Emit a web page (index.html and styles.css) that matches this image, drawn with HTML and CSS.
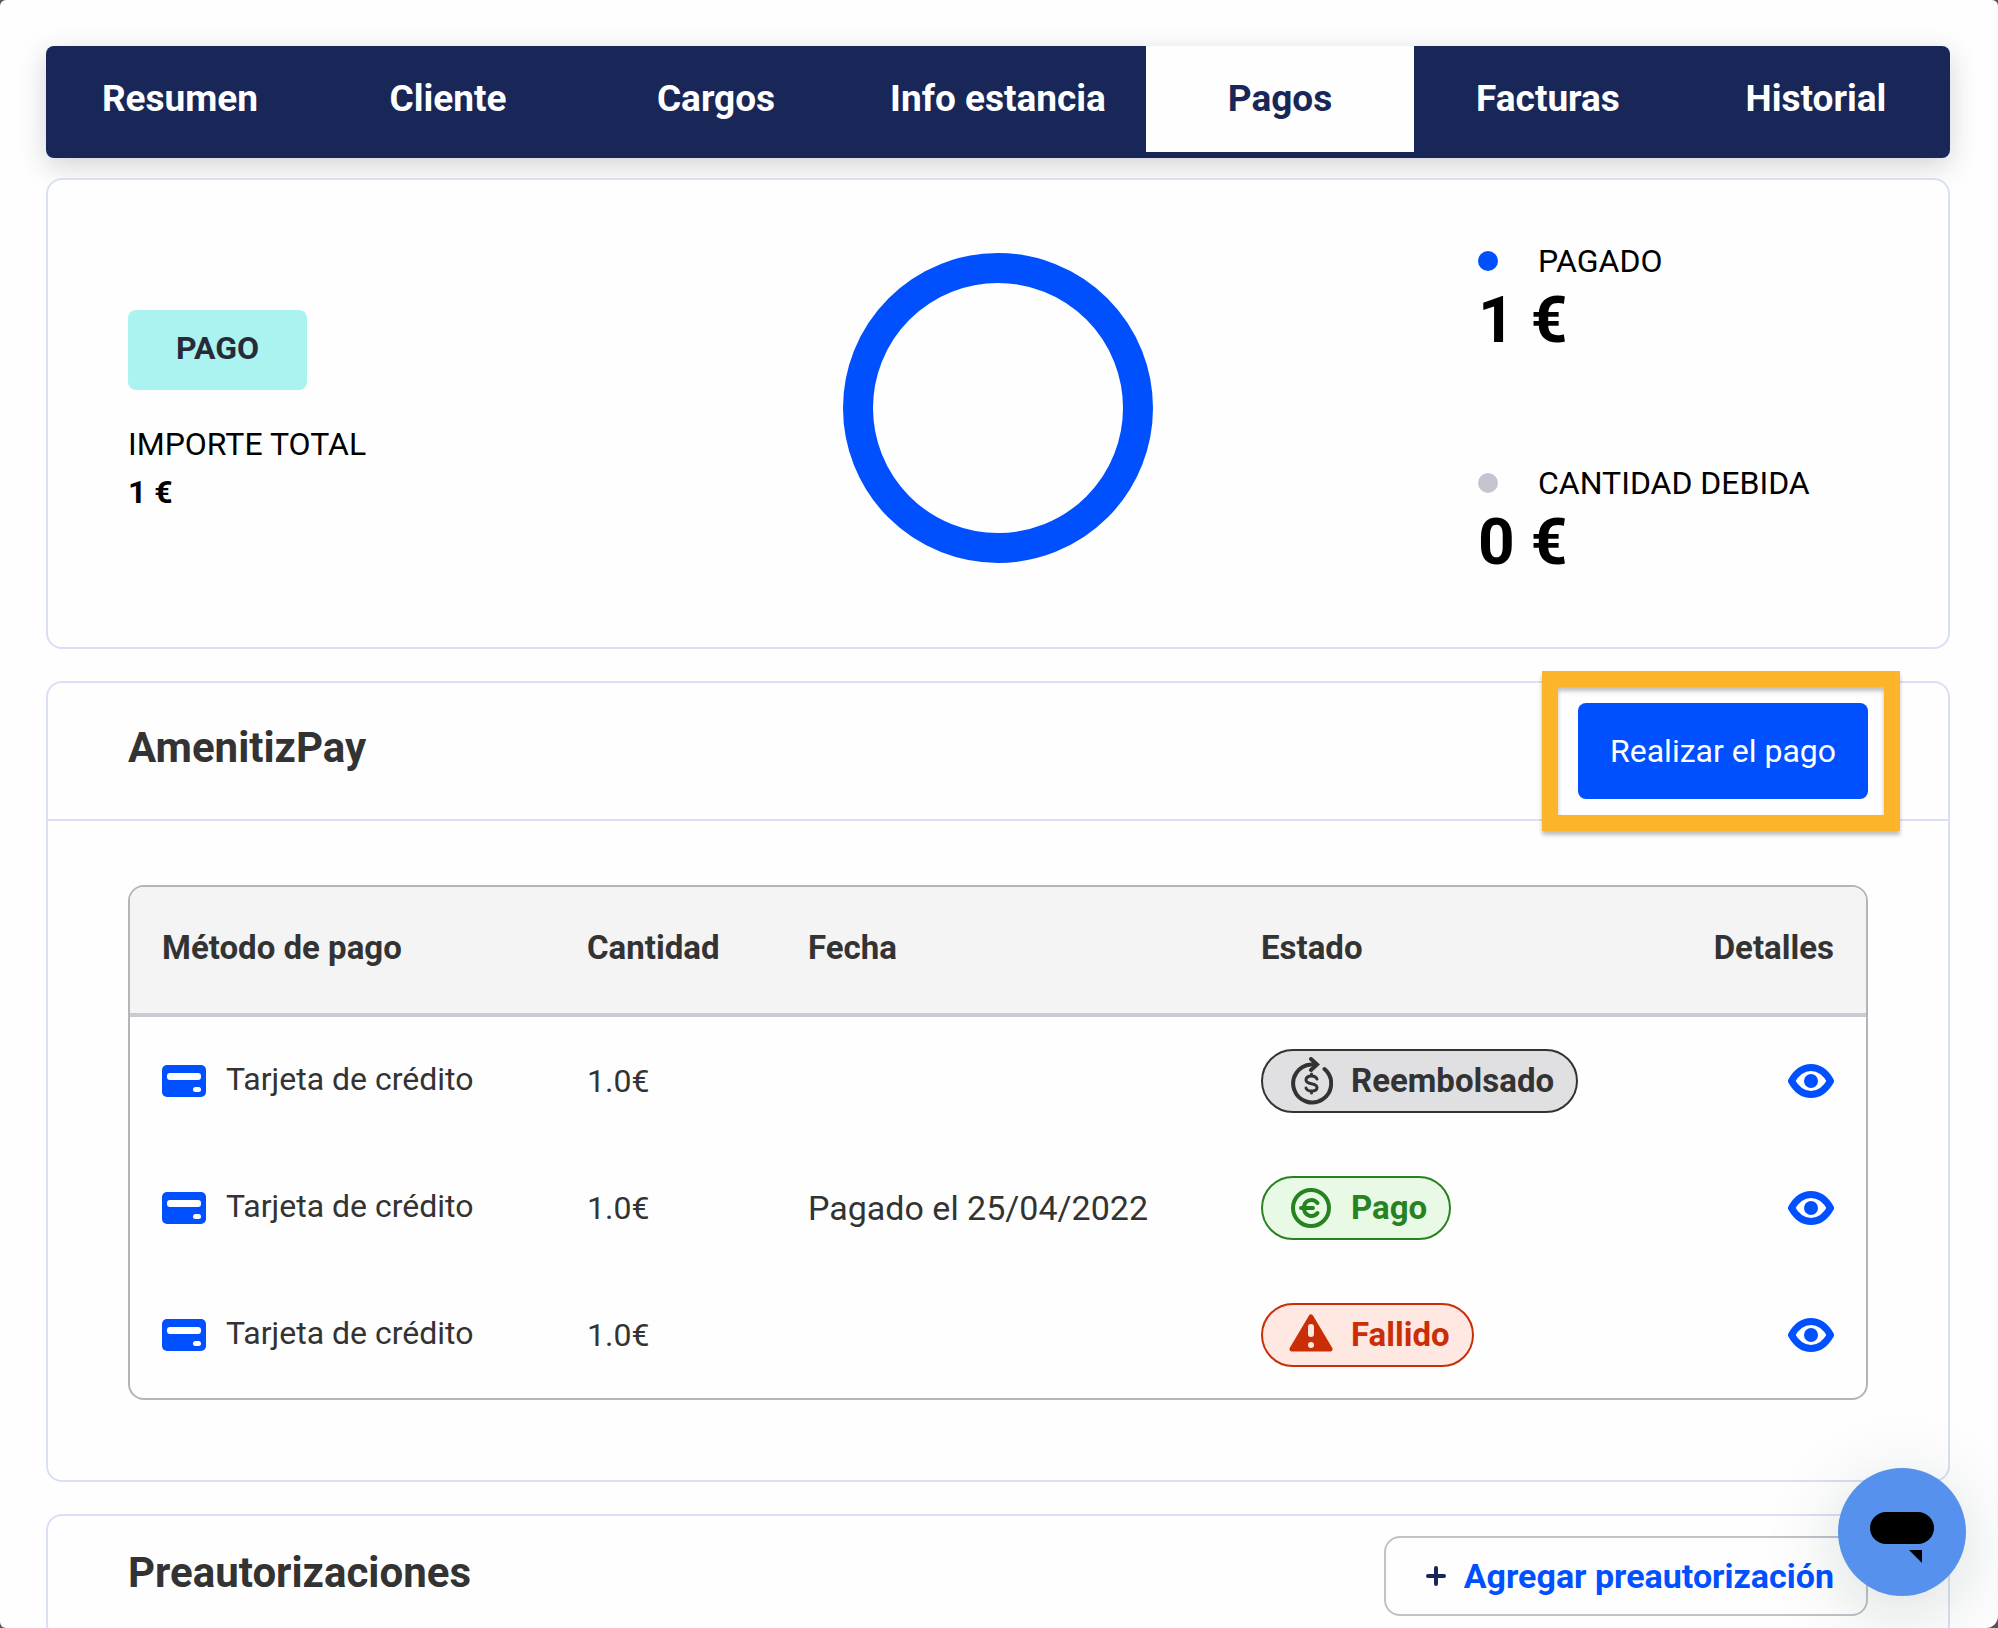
FILE: index.html
```html
<!DOCTYPE html>
<html lang="es">
<head>
<meta charset="utf-8">
<meta name="viewport" content="width=device-width, initial-scale=1">
<title>Pagos</title>
<link rel="stylesheet" href="styles.css">
</head>
<body>
<svg class="sprite" aria-hidden="true">
  <symbol id="card" viewBox="0 0 44 32">
    <rect width="44" height="32" rx="5" fill="currentColor"/>
    <rect x="5" y="8" width="34" height="7" rx="3" fill="#fff"/>
    <rect x="31" y="22" width="8" height="5" rx="2.500" fill="#fff"/>
  </symbol>
  <symbol id="eye" viewBox="0 0 46 34">
    <path d="M3.500 17C8 9 15 3.500 23 3.500S38 9 42.500 17C38 25 31 30.500 23 30.500S8 25 3.500 17Z" fill="none" stroke="currentColor" stroke-width="7" stroke-linejoin="round"/>
    <circle cx="23" cy="17" r="7" fill="currentColor"/>
  </symbol>
</svg>
<main class="page">
  <nav class="tabs">
    <a class="tab" href="#resumen">Resumen</a>
    <a class="tab" href="#cliente">Cliente</a>
    <a class="tab" href="#cargos">Cargos</a>
    <a class="tab tab-wide" href="#estancia">Info estancia</a>
    <a class="tab tab-active" href="#pagos" aria-current="page">Pagos</a>
    <a class="tab" href="#facturas">Facturas</a>
    <a class="tab" href="#historial">Historial</a>
  </nav>

  <section class="panel summary">
    <div class="total">
      <span class="total-status">PAGO</span>
      <span class="label">IMPORTE TOTAL</span>
      <strong class="total-amount">1 €</strong>
    </div>
    <svg class="donut" viewBox="0 0 312 312" role="img" aria-label="Pagado 1 €">
      <circle cx="156" cy="156" r="140" fill="none" stroke="#0050ff" stroke-width="30"/>
    </svg>
    <dl class="legend">
      <div class="legend-item">
        <dt class="label"><span class="dot dot-paid"></span>PAGADO</dt>
        <dd>1 €</dd>
      </div>
      <div class="legend-item">
        <dt class="label"><span class="dot"></span>CANTIDAD DEBIDA</dt>
        <dd>0 €</dd>
      </div>
    </dl>
  </section>

  <section class="panel">
    <header class="panel-header">
      <h2>AmenitizPay</h2>
      <div class="highlight"><button class="button-primary" type="button">Realizar el pago</button></div>
    </header>
    <div class="panel-body">
      <table class="payments">
        <thead>
          <tr><th class="col-method">Método de pago</th><th class="col-amount">Cantidad</th><th class="col-date">Fecha</th><th class="col-status">Estado</th><th class="col-details">Detalles</th></tr>
        </thead>
        <tbody>
          <tr>
            <td><span class="method"><svg class="icon-card"><use href="#card"/></svg><span class="method-name">Tarjeta de crédito</span></span></td>
            <td>1.0€</td>
            <td class="date"></td>
            <td><span class="status status-refunded"><svg class="icon-status" viewBox="0 0 44 48" fill="none" stroke="currentColor" stroke-width="4"><path d="M27 7.500H22A19 19 0 1 0 35.500 12" stroke-linecap="round"/><path d="M22 2L28 7.500L22 13" stroke-linecap="round" stroke-linejoin="miter"/><path d="M28 22C27 19.500 25 19 22.500 19C19 19 17 20.500 17 23C17 28.500 28 25 28 30.500C28 33 26 34 22.500 34C19.500 34 17.500 33 17 31M22.500 17V19M22.500 34V36" stroke-width="3" stroke-linecap="round"/></svg>Reembolsado</span></td>
            <td class="col-details"><button class="view" type="button" aria-label="Ver detalles"><svg class="icon-eye"><use href="#eye"/></svg></button></td>
          </tr>
          <tr>
            <td><span class="method"><svg class="icon-card"><use href="#card"/></svg><span class="method-name">Tarjeta de crédito</span></span></td>
            <td>1.0€</td>
            <td class="date">Pagado el 25/04/2022</td>
            <td><span class="status status-paid"><svg class="icon-status" viewBox="0 0 44 48" fill="none" stroke="currentColor" stroke-width="4"><circle cx="22" cy="24" r="18"/><path d="M28.500 19C24 13.500 15 16 15 24S24 34.500 28.500 29M12 24H24" stroke-linecap="round"/></svg>Pago</span></td>
            <td class="col-details"><button class="view" type="button" aria-label="Ver detalles"><svg class="icon-eye"><use href="#eye"/></svg></button></td>
          </tr>
          <tr>
            <td><span class="method"><svg class="icon-card"><use href="#card"/></svg><span class="method-name">Tarjeta de crédito</span></span></td>
            <td>1.0€</td>
            <td class="date"></td>
            <td><span class="status status-failed"><svg class="icon-status" viewBox="0 0 44 48"><path d="M22 6L41 38H3Z" fill="currentColor" stroke="currentColor" stroke-width="5" stroke-linejoin="round"/><path d="M22 16V23" stroke="#ffe8e1" stroke-width="6" stroke-linecap="round"/><circle cx="22" cy="34" r="3" fill="#ffe8e1"/></svg>Fallido</span></td>
            <td class="col-details"><button class="view" type="button" aria-label="Ver detalles"><svg class="icon-eye"><use href="#eye"/></svg></button></td>
          </tr>
        </tbody>
      </table>
    </div>
  </section>

  <section class="panel">
    <header class="panel-header panel-header-short">
      <h2>Preautorizaciones</h2>
      <button class="button-secondary" type="button"><svg class="icon-plus" viewBox="0 0 20 20"><path d="M10 2V18M2 10H18" stroke="currentColor" stroke-width="4" stroke-linecap="round"/></svg>Agregar preautorización</button>
    </header>
  </section>
</main>
<button class="chat" type="button" aria-label="Abrir chat">
  <svg viewBox="0 0 64 52"><rect width="64" height="32" rx="16"/><path d="M39 38H52V51Z"/></svg>
</button>
</body>
</html>
```
FILE: styles.css
```css
* {
  box-sizing: border-box;
}

html {
  background: #555;
}

body {
  height: 100vh;
  margin: 0;
  overflow: hidden;
  border-radius: 6px 6px 12px 6px;
  background: #fefefe;
  color: #333;
  font-family: Roboto, "Liberation Sans", sans-serif;
  font-size: 32px;
  line-height: 40px;
}

button {
  font: inherit;
  cursor: pointer;
}

h2 {
  margin: 0 0 6px;
  font-size: 42px;
  line-height: 48px;
}

.sprite {
  display: none;
}

.page {
  padding: 46px 48px 0 46px;
}

.tabs {
  display: flex;
  height: 112px;
  margin-bottom: 20px;
  border-radius: 8px;
  background: #182757;
  box-shadow: 0 8px 28px rgba(40, 40, 60, 0.2);
}

.tab {
  flex: 1;
  padding: 33px 0;
  color: #fff;
  font-size: 37px;
  font-weight: 700;
  text-align: center;
  text-decoration: none;
  white-space: nowrap;
}

.tab-wide {
  flex: 0 0 296px;
}

.tab-active {
  border-bottom: 6px solid #182757;
  background: #fefefe;
  color: #182757;
}

.panel {
  margin-bottom: 32px;
  border: 2px solid #d9dff5;
  border-radius: 16px;
  background: #fefefe;
}

.summary {
  display: grid;
  grid-template-columns: 1fr 312px 1fr;
  align-items: center;
  height: 471px;
  padding: 0 80px 12px;
  color: #000;
}

.total {
  display: flex;
  flex-direction: column;
  align-items: flex-start;
  padding-top: 12px;
}

.total-status {
  height: 80px;
  margin-bottom: 32px;
  padding: 18px 48px;
  border-radius: 8px;
  background: #aaf3f0;
  color: #272b37;
  font-weight: 700;
}

.label {
  line-height: 44px;
}

.total-amount {
  line-height: 52px;
}

.donut {
  display: block;
  width: 100%;
}

.legend {
  display: grid;
  gap: 102px;
  margin: 0 0 0 324px;
  padding-top: 4px;
}

.legend-item dt {
  display: flex;
  align-items: center;
  gap: 40px;
  white-space: nowrap;
}

.legend-item dd {
  margin: 0;
  font-size: 64px;
  font-weight: 700;
  line-height: 76px;
}

.dot {
  width: 20px;
  height: 20px;
  border-radius: 50%;
  background: #c5c5cf;
}

.dot-paid {
  background: #0050ff;
}

.panel-header {
  display: flex;
  align-items: center;
  justify-content: space-between;
  height: 138px;
  padding: 0 80px;
  border-bottom: 2px solid #d9dff5;
}

.panel-header-short {
  height: 122px;
}

.highlight {
  margin-right: -32px;
  padding: 16px 16px 16px 20px;
  border: 16px solid #fcb52b;
  box-shadow: 0 4px 4px rgba(0, 0, 0, 0.25), inset 0 4px 4px rgba(0, 0, 0, 0.25);
}

.button-primary {
  display: block;
  height: 96px;
  padding: 0 32px;
  border: 0;
  border-radius: 8px;
  background: #0050ff;
  color: #fff;
}

.button-secondary {
  display: flex;
  align-items: center;
  gap: 18px;
  height: 80px;
  padding: 0 32px 0 40px;
  border: 2px solid #c1c1ca;
  border-radius: 16px;
  background: #fefefe;
  color: #0050ff;
  font-size: 34px;
  font-weight: 700;
}

.icon-plus {
  width: 20px;
  height: 20px;
  color: #182757;
}

.panel-body {
  padding: 64px 80px 80px;
}

.payments {
  width: 100%;
  border: 2px solid #b4b4bc;
  border-radius: 16px;
  border-spacing: 0;
  table-layout: fixed;
  overflow: hidden;
}

.payments th {
  height: 130px;
  padding: 0 0 4px 32px;
  border-bottom: 4px solid #cacad1;
  background: #f4f4f4;
  font-size: 33px;
  text-align: left;
}

.payments td {
  height: 127px;
  padding: 0 0 0 32px;
}

.payments .date {
  font-size: 34px;
}

.col-method {
  width: 425px;
}

.col-amount {
  width: 221px;
}

.col-date {
  width: 453px;
}

.col-status {
  width: 400px;
}

.payments .col-details {
  padding-right: 32px;
  padding-left: 0;
  text-align: right;
}

.method {
  display: flex;
  align-items: center;
  gap: 20px;
}

.method-name {
  padding-bottom: 4px;
}

.icon-card {
  width: 44px;
  height: 32px;
  color: #0050ff;
}

.status {
  display: flex;
  align-items: center;
  gap: 18px;
  width: fit-content;
  height: 64px;
  padding: 0 22px 0 26px;
  border: 2px solid;
  border-radius: 32px;
  font-size: 33px;
  font-weight: 700;
}

.icon-status {
  width: 44px;
  height: 48px;
}

.status-refunded {
  background: #e0e0e2;
}

.status-paid {
  background: #e8fae6;
  color: #27831f;
}

.status-failed {
  background: #ffe8e1;
  color: #c92e06;
}

.view {
  display: block;
  margin-left: auto;
  padding: 0;
  border: 0;
  background: none;
  color: #0050ff;
}

.icon-eye {
  display: block;
  width: 46px;
  height: 34px;
}

.chat {
  position: fixed;
  right: 32px;
  bottom: 32px;
  display: grid;
  place-items: center;
  width: 128px;
  height: 128px;
  padding: 12px 0 0;
  border: 0;
  border-radius: 50%;
  background: #5692ed;
  box-shadow: 0 16px 80px rgba(0, 50, 40, 0.16);
}

.chat svg {
  width: 64px;
  height: 52px;
}
```
